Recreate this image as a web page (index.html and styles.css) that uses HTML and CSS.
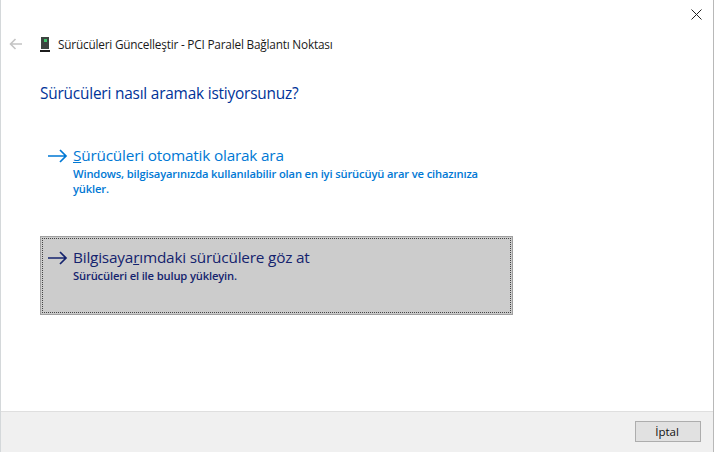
FILE: index.html
```html
<!DOCTYPE html>
<html lang="tr">
<head>
    <meta charset="UTF-8">
    <meta name="viewport" content="width=device-width, initial-scale=1.0">
    <title>Sürücüleri Güncelleştir</title>
    <link rel="stylesheet" href="styles.css">
</head>
<body>
    <div class="dialog">
        <div class="close-row">
            <svg class="close-icon" width="11" height="11" viewBox="0 0 11 11"><path d="M.5.5l10 10M10.5.5l-10 10" stroke="#222" fill="none"/></svg>
        </div>
        <div class="title-row">
            <svg class="back-icon" width="14" height="12" viewBox="0 0 14 12"><path d="M13 6H2M6.500 1L1.500 6l5 5" stroke="#c4c4c4" stroke-width="1.600" fill="none"/></svg>
            <svg class="device-icon" width="10" height="15" viewBox="0 0 10 15"><path d="M1 0h8v12H1z" fill="#3c4440"/><path d="M4 2h3v3H4z" fill="#3fc46a"/><path d="M0 13h10v2H0z" fill="#1c1c1c"/></svg>
            <span class="title-text">Sürücüleri Güncelleştir - PCI Paralel Bağlantı Noktası</span>
        </div>
        <div class="content">
            <h1>Sürücüleri nasıl aramak istiyorsunuz?</h1>
            <div class="option">
                <svg class="arrow" width="20" height="14" viewBox="0 0 20 14"><path d="M0 7h18M12 1l6 6-6 6" stroke="currentColor" stroke-width="1.700" fill="none"/></svg>
                <div class="option-text">
                    <div class="option-title"><u>S</u>ürücüleri otomatik olarak ara</div>
                    <div class="option-desc">Windows, bilgisayarınızda kullanılabilir olan en iyi sürücüyü arar ve cihazınıza yükler.</div>
                </div>
            </div>
            <div class="option selected">
                <svg class="arrow" width="20" height="14" viewBox="0 0 20 14"><path d="M0 7h18M12 1l6 6-6 6" stroke="currentColor" stroke-width="1.700" fill="none"/></svg>
                <div class="option-text">
                    <div class="option-title">Bilgisaya<u>r</u>ımdaki sürücülere göz at</div>
                    <div class="option-desc">Sürücüleri el ile bulup yükleyin.</div>
                </div>
            </div>
        </div>
        <div class="footer">
            <button type="button">İptal</button>
        </div>
    </div>
</body>
</html>
```

FILE: styles.css
```css
html, body {
    height: 100%;
}
body {
    margin: 0;
    background-color: #fff;
    font-family: "Open Sans", "Noto Sans", sans-serif;
}
.dialog {
    height: 452px;
    display: flex;
    flex-direction: column;
    box-sizing: border-box;
    border-left: 1px solid #d4d8da;
    border-right: 1px solid #b8b8b8;
}
.close-row {
    height: 33px;
    display: flex;
    justify-content: flex-end;
    align-items: flex-start;
    padding: 9px 11px 0 0;
    box-sizing: border-box;
}
.title-row {
    height: 22px;
    display: flex;
    align-items: center;
}
.back-icon {
    margin-left: 8px;
}
.device-icon {
    margin-left: 17px;
}
.title-text {
    margin-left: 8px;
    font-size: 11.800px;
    color: #1a1a1a;
    letter-spacing: -0.2px;
}
.content {
    flex: 1;
    padding: 0 0 0 39px;
}
h1 {
    margin: 29px 0 0 0;
    font-size: 15.400px;
    font-weight: 400;
    line-height: 20px;
    color: #003399;
    letter-spacing: -0.2px;
}
.option {
    width: 473px;
    height: 79px;
    margin-top: 31px;
    box-sizing: border-box;
    display: flex;
    align-items: flex-start;
    padding: 9px 0 0 7px;
    color: #0078d4;
    border: 1px solid transparent;
}
.option.selected {
    margin-top: 22px;
    padding-top: 10px;
    background-color: #cccccc;
    color: #14236e;
    border: 1px solid #a0a0a0;
    outline: 1px dotted #444;
    outline-offset: -3px;
}
.arrow {
    margin-top: 4px;
    flex: none;
}
.option-text {
    margin-left: 5px;
}
.option-title {
    font-size: 15.350px;
    line-height: 20px;
    letter-spacing: -0.2px;
}
.option-desc {
    margin-top: 1px;
    font-size: 11.200px;
    font-weight: 600;
    line-height: 15px;
    width: 420px;
    letter-spacing: -0.15px;
}
.footer {
    height: 41px;
    background-color: #f0f0f0;
    border-top: 1px solid #dfdfdf;
    box-sizing: border-box;
    display: flex;
    justify-content: flex-end;
    padding: 9px 12px 0 0;
}
button {
    width: 66px;
    height: 21px;
    background-color: #e1e1e1;
    border: 1px solid #adadad;
    font-family: inherit;
    font-size: 11.500px;
    color: #111;
    padding: 0 2px 0 0;
}
```
